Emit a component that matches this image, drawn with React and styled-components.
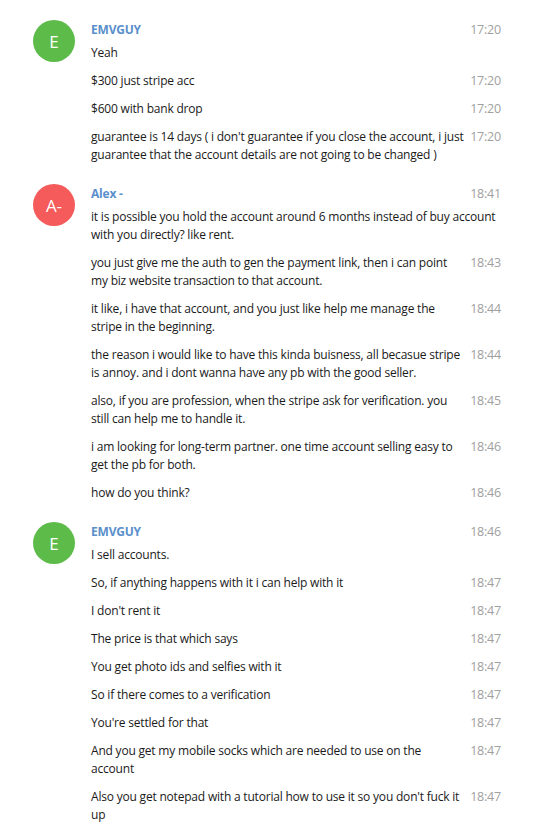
import React from "react";
import styled, { createGlobalStyle } from "styled-components";

const Global = createGlobalStyle`
  html, body { margin: 0; padding: 0; background: #ffffff; }
  body { font-family: "Open Sans", "Noto Sans", sans-serif; }
`;

const Page = styled.div`
  display: flex;
  flex-direction: column;
  gap: 16px;
  padding: 21px 35px 20px 33px;
  background: #fff;
`;

const Group = styled.div`
  display: flex;
  align-items: flex-start;
  gap: 16px;
`;

const Avatar = styled.div`
  flex: 0 0 42px;
  width: 42px;
  height: 42px;
  margin-top: -1px;
  border-radius: 50%;
  background: ${(p) => p.$color};
  color: #fff;
  display: flex;
  align-items: center;
  justify-content: center;
  font-size: 17px;
  line-height: 1;
`;

const Body = styled.div`
  flex: 1;
  min-width: 0;
  display: flex;
  flex-direction: column;
`;

const Row = styled.div`
  display: flex;
  align-items: flex-start;
  justify-content: space-between;
  gap: 6px;
  padding: ${(p) => (p.$head ? "0" : "5px 0")};
`;

const Name = styled.div`
  font-size: 12px;
  letter-spacing: -0.2px;
  font-weight: 700;
  color: #5a8fcb;
  line-height: 18px;
`;

const Text = styled.div`
  font-size: 12px;
  letter-spacing: -0.2px;
  line-height: 18px;
  color: #1a1a1a;
  white-space: nowrap;
`;

const Time = styled.div`
  flex: 0 0 auto;
  font-size: 12.5px;
  letter-spacing: -0.2px;
  line-height: 18px;
  color: #a0a0a0;
`;

const groups = [
  {
    name: "EMVGUY",
    initial: "E",
    color: "#5dbb4a",
    time: "17:20",
    messages: [
      { lines: ["Yeah"] },
      { lines: ["$300 just stripe acc"], time: "17:20" },
      { lines: ["$600 with bank drop"], time: "17:20" },
      {
        lines: [
          "guarantee is 14 days ( i don't guarantee if you close the account, i just",
          "guarantee that the account details are not going to be changed )",
        ],
        time: "17:20",
      },
    ],
  },
  {
    name: "Alex -",
    initial: "A-",
    color: "#f45b5a",
    time: "18:41",
    messages: [
      {
        lines: [
          "it is possible you hold the account around 6 months instead of buy account",
          "with you directly? like rent.",
        ],
      },
      {
        lines: [
          "you just give me the auth to gen the payment link, then i can point",
          "my biz website transaction to that account.",
        ],
        time: "18:43",
      },
      {
        lines: [
          "it like, i have that account, and you just like help me manage the",
          "stripe in the beginning.",
        ],
        time: "18:44",
      },
      {
        lines: [
          "the reason i would like to have this kinda buisness, all becasue stripe",
          "is annoy. and i dont wanna have any pb with the good seller.",
        ],
        time: "18:44",
      },
      {
        lines: [
          "also, if you are profession, when the stripe ask for verification. you",
          "still can help me to handle it.",
        ],
        time: "18:45",
      },
      {
        lines: [
          "i am looking for long-term partner. one time account selling easy to",
          "get the pb for both.",
        ],
        time: "18:46",
      },
      { lines: ["how do you think?"], time: "18:46" },
    ],
  },
  {
    name: "EMVGUY",
    initial: "E",
    color: "#5dbb4a",
    time: "18:46",
    messages: [
      { lines: ["I sell accounts."] },
      { lines: ["So, if anything happens with it i can help with it"], time: "18:47" },
      { lines: ["I don't rent it"], time: "18:47" },
      { lines: ["The price is that which says"], time: "18:47" },
      { lines: ["You get photo ids and selfies with it"], time: "18:47" },
      { lines: ["So if there comes to a verification"], time: "18:47" },
      { lines: ["You're settled for that"], time: "18:47" },
      {
        lines: ["And you get my mobile socks which are needed to use on the", "account"],
        time: "18:47",
      },
      {
        lines: [
          "Also you get notepad with a tutorial how to use it so you don't fuck it",
          "up",
        ],
        time: "18:47",
      },
    ],
  },
];

export default function App() {
  return (
    <>
      <Global />
      <Page>
        {groups.map((g, gi) => (
          <Group key={gi}>
            <Avatar $color={g.color}>{g.initial}</Avatar>
            <Body>
              <Row $head>
                <Name>{g.name}</Name>
                <Time>{g.time}</Time>
              </Row>
              {g.messages.map((m, mi) => (
                <Row key={mi}>
                  <Text>
                    {m.lines.map((l, li) => (
                      <React.Fragment key={li}>
                        {li > 0 && <br />}
                        {l}
                      </React.Fragment>
                    ))}
                  </Text>
                  {m.time && <Time>{m.time}</Time>}
                </Row>
              ))}
            </Body>
          </Group>
        ))}
      </Page>
    </>
  );
}
